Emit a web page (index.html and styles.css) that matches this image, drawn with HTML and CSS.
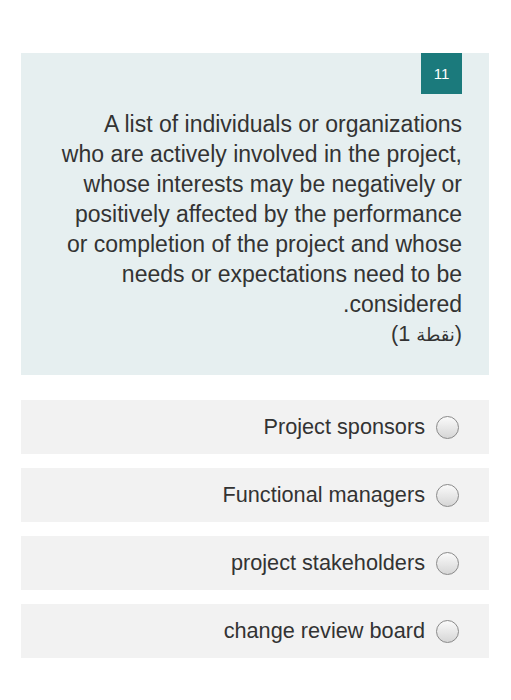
FILE: index.html
```
<!DOCTYPE html>
<html>
<head>
<meta charset="utf-8">
<link rel="stylesheet" href="styles.css">
</head>
<body>
<div class="page">
  <div class="card">
    <div class="badge-row"><span class="badge">11</span></div>
    <div class="question">A list of individuals or organizations who are actively involved in the project, whose interests may be negatively or positively affected by the performance or completion of the project and whose needs or expectations need to be considered.</div>
    <div class="points"><span class="pts">(1</span><span class="pts-ar">نقطة</span><span class="pts">)</span></div>
  </div>
  <div class="options">
    <label class="option"><span class="radio"></span><span class="opt-text">Project sponsors</span></label>
    <label class="option"><span class="radio"></span><span class="opt-text">Functional managers</span></label>
    <label class="option"><span class="radio"></span><span class="opt-text">project stakeholders</span></label>
    <label class="option"><span class="radio"></span><span class="opt-text">change review board</span></label>
  </div>
</div>
</body>
</html>
```
FILE: styles.css
```
html, body {
  margin: 0;
  padding: 0;
  background: #ffffff;
}
body {
  font-family: "Liberation Sans", Arial, sans-serif;
  color: #333333;
}
.page {
  padding: 53px 22px 0 21px;
}
.card {
  background: #e6eff0;
  padding: 0 27px 25px 37px;
  direction: rtl;
}
.badge-row {
  display: flex;
  justify-content: flex-start;
}
.badge {
  display: flex;
  align-items: center;
  justify-content: center;
  width: 41px;
  height: 41px;
  background: #1b7a7c;
  color: #ffffff;
  font-size: 15px;
  direction: ltr;
}
.question {
  margin-top: 15px;
  font-size: 23px;
  line-height: 30px;
  text-align: right;
}
.points {
  display: flex;
  direction: ltr;
  justify-content: flex-end;
  align-items: baseline;
  font-size: 21.7px;
  line-height: 30px;
}
.pts-ar {
  margin-left: 6px;
  font-family: "DejaVu Sans", sans-serif;
  font-size: 18px;
}
.options {
  margin-top: 25px;
  display: flex;
  flex-direction: column;
  gap: 14px;
}
.option {
  display: flex;
  flex-direction: row-reverse;
  justify-content: flex-start;
  align-items: center;
  gap: 11px;
  height: 54px;
  padding-right: 30px;
  background: #f2f2f2;
  font-size: 21.7px;
}
.radio {
  width: 21px;
  height: 21px;
  border-radius: 50%;
  border: 1px solid #8a8a8a;
  background: linear-gradient(#fafafa, #d6d6d6);
  flex: none;
}
.opt-text {
  color: #333333;
}
```
